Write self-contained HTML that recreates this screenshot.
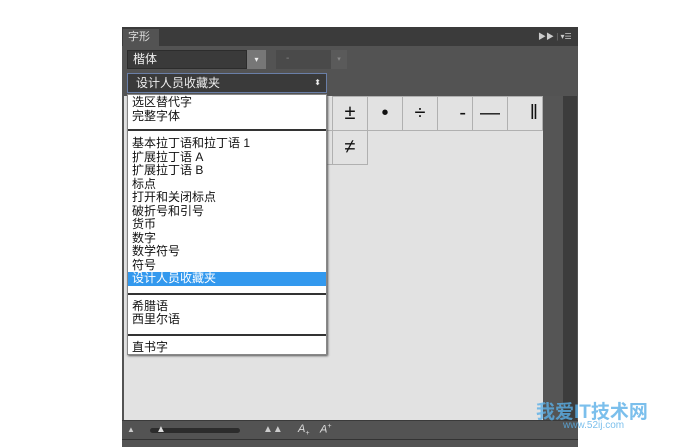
<!DOCTYPE html><html><head><style>
body{margin:0;width:700px;height:447px;background:#fff;position:relative;overflow:hidden;font-family:"Liberation Sans","Noto Sans CJK SC",sans-serif}
div{position:absolute;box-sizing:border-box}
.c{width:36px;height:35px;border:1px solid #b0b0b0;background:#e2e2e2;font-size:20px;text-align:center;line-height:32px;color:#111}
.m div{position:relative;font-size:12px;line-height:13.5px;height:13.5px;padding-left:4px;color:#111;white-space:nowrap;overflow:visible}
.m .s{height:auto;padding:0;border-top:2px solid #333}
</style></head><body>
<div style="left:122px;top:27px;width:456px;height:420px;background:#535353"></div>
<div style="left:122px;top:27px;width:456px;height:19px;background:#3b3b3b"></div>
<div style="left:123px;top:29px;width:36px;height:17px;background:#535353;color:#ddd;font-size:11px;line-height:17px;padding-left:5px">字形</div>
<div style="left:538px;top:31px;color:#ccc;font-size:8px">▶▶ <span style="color:#777">|</span> ▾☰</div>
<div style="left:127px;top:50px;width:120px;height:19px;background:#3a3a3a;border:1px solid #2c2c2c;color:#eee;font-size:12px;line-height:17px;padding-left:5px">楷体</div>
<div style="left:247px;top:50px;width:19px;height:19px;background:#777;color:#eee;font-size:8px;text-align:center;line-height:19px">▾</div>
<div style="left:276px;top:50px;width:55px;height:19px;background:#4a4a4a;color:#888;font-size:10px;line-height:17px;padding-left:10px">-</div>
<div style="left:331px;top:50px;width:16px;height:19px;background:#5a5a5a;color:#888;font-size:7px;text-align:center;line-height:19px">▾</div>
<div style="left:127px;top:73px;width:200px;height:20px;background:#3a3a3a;border:1px solid #6a7fa8;color:#eee;font-size:12px;line-height:18px;padding-left:8px">设计人员收藏夹<span style="position:absolute;right:5px;font-size:8px">⬍</span></div>
<div style="left:124px;top:96px;width:419px;height:324px;background:#e2e2e2"></div>
<div style="left:543px;top:96px;width:20px;height:324px;background:#555"></div>
<div style="left:563px;top:96px;width:14px;height:324px;background:#3c3c3c"></div>
<div class="c" style="left:332px;top:96px">±</div>
<div class="c" style="left:367px;top:96px">•</div>
<div class="c" style="left:402px;top:96px">÷</div>
<div class="c" style="left:437px;top:96px;text-align:right;padding-right:6px">-</div>
<div class="c" style="left:472px;top:96px">—</div>
<div class="c" style="left:507px;top:96px;text-align:right;padding-right:4px">‖</div>
<div class="c" style="left:297px;top:130px"></div>
<div class="c" style="left:332px;top:130px">≠</div>
<div class="m" style="left:127px;top:94px;width:200px;height:261px;background:#fff;border:1px solid #888;box-shadow:1px 1px 2px #555;padding-top:1px">
<div>选区替代字</div><div>完整字体</div>
<div class="s" style="margin-top:6px;height:8px"></div>
<div>基本拉丁语和拉丁语 1</div><div>扩展拉丁语 A</div><div>扩展拉丁语 B</div><div>标点</div><div>打开和关闭标点</div><div>破折号和引号</div><div>货币</div><div>数字</div><div>数学符号</div><div>符号</div>
<div style="background:#3399ee;color:#fff">设计人员收藏夹</div>
<div class="s" style="margin-top:7.5px;height:6.5px"></div>
<div>希腊语</div><div>西里尔语</div>
<div class="s" style="margin-top:7.5px;height:7px"></div>
<div>直书字</div></div>
<div style="left:122px;top:420px;width:456px;height:1px;background:#3a3a3a"></div>
<div style="left:127px;top:425px;color:#ccc;font-size:8px">▲</div>
<div style="left:150px;top:428px;width:90px;height:5px;background:#2c2c2c;border-radius:3px"></div>
<div style="left:156px;top:424px;color:#ddd;font-size:10px">▲</div>
<div style="left:263px;top:424px;color:#ccc;font-size:10px">▲▲</div>
<div style="left:298px;top:423px;color:#ddd;font-size:11px;font-style:italic">A<sub style="font-size:7px">+</sub></div>
<div style="left:320px;top:423px;color:#ddd;font-size:11px;font-style:italic">A<sup style="font-size:7px">+</sup></div>
<div style="left:122px;top:439px;width:456px;height:1px;background:#333"></div>
<div style="left:536px;top:397px;color:#5bb0e8;font-size:19px;font-weight:bold;opacity:.8">我爱IT技术网</div>
<div style="left:563px;top:420px;color:#5bb0e8;font-size:10px;opacity:.8">www.52ij.com</div>
</body></html>
